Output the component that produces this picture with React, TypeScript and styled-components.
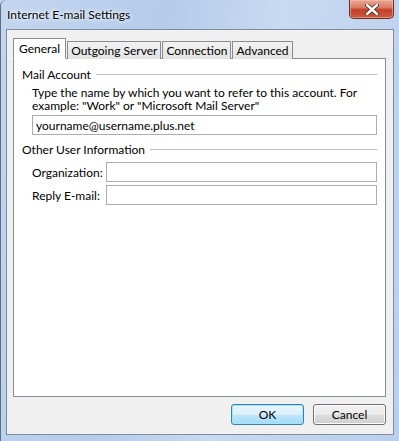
import styled, { createGlobalStyle } from "styled-components";

const GlobalStyle = createGlobalStyle`
  html, body {
    margin: 0;
    padding: 0;
    background: #bed3ee;
  }
  body {
    font-family: Lato, "Noto Sans", sans-serif;
    font-size: 12px;
    color: #000;
  }
`;

const Window = styled.div`
  width: 399px;
  height: 441px;
  box-sizing: border-box;
  display: flex;
  flex-direction: column;
  background: linear-gradient(100deg, #c3d6ef 0%, #b4cbea 35%, #c8daf1 60%, #b9cfec 100%);
  border-left: 1px solid #5d6e83;
  border-radius: 6px 6px 0 0;
  overflow: hidden;
`;

const TitleBar = styled.div`
  height: 29px;
  flex-shrink: 0;
  display: flex;
  align-items: flex-start;
  justify-content: space-between;
  padding-left: 6px;
`;

const Title = styled.span`
  margin-top: 7px;
  font-size: 12px;
  color: #000;
  text-shadow: 0 0 6px #fff, 0 0 3px #fff;
`;

const CloseButton = styled.div`
  width: 45px;
  height: 19px;
  margin-right: 5px;
  box-sizing: border-box;
  border: 1px solid #6a2b22;
  border-top: none;
  border-radius: 0 0 5px 5px;
  background: linear-gradient(#e9a797 0%, #d88068 40%, #c2402a 55%, #cf5a3f 100%);
  display: flex;
  align-items: center;
  justify-content: center;
  box-shadow: inset 0 0 0 1px rgba(255, 200, 180, 0.5);
`;

const Client = styled.div`
  flex: 1;
  margin: 0 5px 6px 5px;
  border: 1px solid #7f8c9b;
  background: #f0f0f0;
  display: flex;
  flex-direction: column;
  padding: 8px 7px 9px 6px;
`;

const TabStrip = styled.div`
  display: flex;
  align-items: flex-end;
  height: 21px;
  position: relative;
  z-index: 1;
  margin-bottom: -1px;
`;

const Tab = styled.div<{ $active?: boolean }>`
  box-sizing: border-box;
  height: ${(p) => (p.$active ? "21px" : "18px")};
  padding: 0 ${(p) => (p.$active ? "5px" : "3px")};
  margin-left: ${(p) => (p.$active ? "0" : "1px")};
  border: 1px solid #898c95;
  border-bottom: ${(p) => (p.$active ? "1px solid #fff" : "none")};
  background: ${(p) => (p.$active ? "#fff" : "linear-gradient(#f2f2f2, #e3e3e3)")};
  display: flex;
  align-items: center;
  white-space: nowrap;
  line-height: 16px;
  padding-top: ${(p) => (p.$active ? "0" : "1px")};
`;

const Panel = styled.div`
  flex: 1;
  background: #fff;
  border: 1px solid #898c95;
  padding: 7px 8px 0 8px;
  display: flex;
  flex-direction: column;
`;

const GroupHeader = styled.div`
  display: flex;
  align-items: center;
  gap: 5px;
  height: 16px;
  &::after {
    content: "";
    flex: 1;
    height: 1px;
    background: #bfbfbf;
  }
`;

const GroupBody = styled.div`
  padding: 0 0 0 10px;
  display: flex;
  flex-direction: column;
`;

const Description = styled.p`
  margin: 4px 0 3px 0;
  line-height: 13px;
  white-space: nowrap;
`;

const TextBox = styled.div`
  box-sizing: border-box;
  height: 20px;
  border: 1px solid #abadb3;
  background: #fff;
  padding: 0 3px;
  display: flex;
  align-items: center;
`;

const FieldGrid = styled.div`
  display: grid;
  grid-template-columns: 74px 1fr;
  row-gap: 3px;
  align-items: center;
  margin-top: 5px;
`;

const Spaced = styled.div`
  margin-top: 6px;
`;

const ButtonRow = styled.div`
  display: flex;
  justify-content: flex-end;
  gap: 9px;
  margin-top: 7px;
`;

const Button = styled.div<{ $default?: boolean }>`
  box-sizing: border-box;
  width: 73px;
  height: 21px;
  border: 1px solid ${(p) => (p.$default ? "#3c7fb1" : "#707070")};
  border-radius: 3px;
  background: ${(p) =>
    p.$default
      ? "linear-gradient(#eaf6fd 0%, #d9f0fc 50%, #bee6fd 51%, #a7d9f5 100%)"
      : "linear-gradient(#f2f2f2 0%, #ebebeb 50%, #dddddd 51%, #cfcfcf 100%)"};
  box-shadow: inset 0 0 0 1px ${(p) => (p.$default ? "#9ee8fd" : "#fcfcfc")};
  display: flex;
  align-items: center;
  justify-content: center;
`;

export default function App() {
  return (
    <>
      <GlobalStyle />
      <Window>
        <TitleBar>
          <Title>Internet E-mail Settings</Title>
          <CloseButton>
            <svg width="14" height="11" viewBox="0 0 14 11">
              <path
                d="M2 1 L12 10 M12 1 L2 10"
                stroke="#4a2620"
                strokeWidth="4"
                strokeLinecap="round"
              />
              <path
                d="M2 1 L12 10 M12 1 L2 10"
                stroke="#fff"
                strokeWidth="2.4"
                strokeLinecap="round"
              />
            </svg>
          </CloseButton>
        </TitleBar>
        <Client>
          <TabStrip>
            <Tab $active>General</Tab>
            <Tab>Outgoing Server</Tab>
            <Tab>Connection</Tab>
            <Tab>Advanced</Tab>
          </TabStrip>
          <Panel>
            <GroupHeader>Mail Account</GroupHeader>
            <GroupBody>
              <Description>
                Type the name by which you want to refer to this account. For
                <br />
                example: "Work" or "Microsoft Mail Server"
              </Description>
              <TextBox>yourname@username.plus.net</TextBox>
            </GroupBody>
            <Spaced>
              <GroupHeader>Other User Information</GroupHeader>
            </Spaced>
            <GroupBody>
              <FieldGrid>
                <span>Organization:</span>
                <TextBox />
                <span>Reply E-mail:</span>
                <TextBox />
              </FieldGrid>
            </GroupBody>
          </Panel>
          <ButtonRow>
            <Button $default>OK</Button>
            <Button>Cancel</Button>
          </ButtonRow>
        </Client>
      </Window>
    </>
  );
}
